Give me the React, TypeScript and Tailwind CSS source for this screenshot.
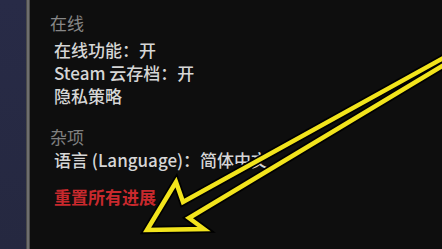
import React from "react";

const pts = "147,230 176,182 183,202 447,56 447,63 189,218 204,229";

export default function App() {
  return (
    <div
      className="relative flex w-[442px] h-[249px] overflow-hidden bg-[#0e0e0e]"
      style={{ fontFamily: '"Noto Sans CJK SC", "Noto Sans", sans-serif' }}
    >
      <div className="w-[26px] h-full bg-gradient-to-b from-[#282b47] to-[#252840]" />
      <div className="w-[4px] h-full bg-[#6e6e6e] border-x border-[#4a4a4a]" />
      <div className="flex-1 h-full bg-[#0e0e0e] pl-[20px] pt-[12px] flex flex-col">
        <div className="text-[17px] leading-[22px] text-[#878787]">在线</div>
        <div className="mt-[4px] pl-[4px] flex flex-col text-[17px] leading-[23px] font-medium text-[#d6d6d6]">
          <div>在线功能：开</div>
          <div>Steam 云存档：开</div>
          <div>隐私策略</div>
        </div>
        <div className="mt-[19px] text-[17px] leading-[22px] text-[#7f7f7f]">杂项</div>
        <div className="pl-[4px] text-[17px] leading-[23px] font-medium text-[#d6d6d6] whitespace-nowrap">
          语言 (Language)：简体中文
        </div>
        <div className="mt-[14px] pl-[4px] text-[17px] leading-[23px] font-bold text-[#c8292d]">
          重置所有进展
        </div>
      </div>
      <svg
        className="absolute inset-0 pointer-events-none"
        width="442"
        height="249"
        viewBox="0 0 442 249"
      >
        <polygon
          points={pts}
          fill="none"
          stroke="#000000"
          strokeWidth="8"
          strokeLinejoin="miter"
          strokeMiterlimit="10"
        />
        <polygon
          points={pts}
          fill="none"
          stroke="#f2e41c"
          strokeWidth="4.5"
          strokeLinejoin="miter"
          strokeMiterlimit="10"
        />
      </svg>
    </div>
  );
}
